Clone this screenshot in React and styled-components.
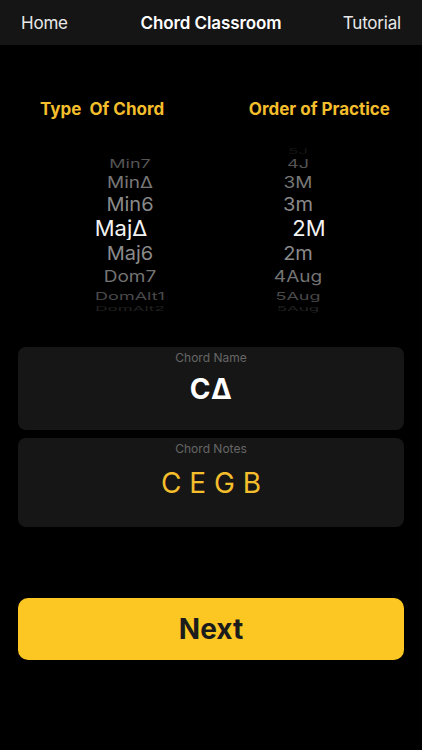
import React from 'react';
import styled, { createGlobalStyle } from 'styled-components';

const GlobalStyle = createGlobalStyle`
  html, body {
    margin: 0;
    padding: 0;
    background: #000;
  }
  body {
    font-family: Inter, "Noto Sans", "Liberation Sans", sans-serif;
    -webkit-font-smoothing: antialiased;
  }
`;

const Screen = styled.div`
  width: 422px;
  height: 750px;
  background: #000;
  display: flex;
  flex-direction: column;
  overflow: hidden;
`;

const NavBar = styled.div`
  height: 45px;
  background: #151515;
  display: grid;
  grid-template-columns: 1fr auto 1fr;
  align-items: center;
  padding: 0 21px;
  flex-shrink: 0;
`;

const NavLink = styled.span`
  font-size: 17px;
  color: #e8e8e8;
  letter-spacing: -0.2px;
  justify-self: ${(p) => (p.$right ? 'end' : 'start')};
`;

const NavTitle = styled.span`
  font-size: 17px;
  font-weight: 600;
  color: #fff;
  letter-spacing: -0.1px;
`;

const Headers = styled.div`
  margin-top: 54px;
  display: flex;
  justify-content: space-between;
  padding: 0 32px 0 40px;
`;

const Header = styled.span`
  font-size: 17px;
  font-weight: 700;
  line-height: 20px;
  color: #f4be2c;
  white-space: pre;
`;

const Wheels = styled.div`
  margin-top: 27px;
  display: flex;
  padding-left: 70px;
  gap: 48px;
`;

const Wheel = styled.div`
  width: 120px;
  display: flex;
  flex-direction: column;
`;

const Row = styled.div`
  height: ${(p) => p.$h}px;
  display: flex;
  align-items: center;
  justify-content: center;
  overflow: hidden;
`;

const RowText = styled.span`
  display: block;
  font-size: ${(p) => p.$size}px;
  line-height: 1;
  color: ${(p) => p.$color};
  transform: translateX(${(p) => p.$shift}px) scaleY(${(p) => p.$scale});
  white-space: nowrap;
`;

const Cards = styled.div`
  margin: 34px 18px 0;
  display: flex;
  flex-direction: column;
  gap: 8px;
`;

const Card = styled.div`
  height: ${(p) => p.$h}px;
  background: #161616;
  border-radius: 8px;
  display: flex;
  flex-direction: column;
  align-items: center;
  padding-top: 4px;
  box-sizing: border-box;
`;

const CardLabel = styled.span`
  font-size: 12px;
  line-height: 14px;
  color: #666;
`;

const ChordName = styled.span`
  margin-top: 8px;
  font-size: 28px;
  font-weight: 700;
  line-height: 32px;
  color: #fff;
  letter-spacing: 0.5px;
`;

const ChordNotes = styled.span`
  margin-top: 10px;
  font-size: 28px;
  line-height: 34px;
  color: #f4be2c;
  white-space: pre;
`;

const NextButton = styled.button`
  margin: 71px 18px 0;
  height: 62px;
  border: none;
  border-radius: 10px;
  background: #fdc723;
  color: #1c1c1c;
  font-family: inherit;
  font-size: 28px;
  font-weight: 700;
  cursor: pointer;
`;

// one entry per wheel row, top to bottom; index 4 is the selected row
const rowStyles = [
  { h: 10, scale: 0.45, color: '#141414', size: 17 },
  { h: 16, scale: 0.62, color: '#555', size: 18 },
  { h: 20, scale: 0.82, color: '#777', size: 19 },
  { h: 23, scale: 0.95, color: '#8a8a8a', size: 20 },
  { h: 25, scale: 1, color: '#f2f2f2', size: 22 },
  { h: 25, scale: 0.95, color: '#8a8a8a', size: 20 },
  { h: 22, scale: 0.85, color: '#747474', size: 19 },
  { h: 17, scale: 0.6, color: '#4a4a4a', size: 18 },
  { h: 9, scale: 0.4, color: '#222', size: 17 },
];

const chordTypes = ['', 'Min7', 'MinΔ', 'Min6', 'MajΔ', 'Maj6', 'Dom7', 'DomAlt1', 'DomAlt2'];
const intervals = ['5J', '4J', '3M', '3m', '2M', '2m', '4Aug', '5Aug', '5Aug'];

function PickerWheel({ items, shift }) {
  return (
    <Wheel>
      {items.map((label, i) => {
        const s = rowStyles[i];
        return (
          <Row key={i} $h={s.h}>
            <RowText $size={s.size} $color={s.color} $scale={s.scale} $shift={i === 4 ? shift : 0}>
              {label}
            </RowText>
          </Row>
        );
      })}
    </Wheel>
  );
}

export default function App() {
  return (
    <>
      <GlobalStyle />
      <Screen>
        <NavBar>
          <NavLink>Home</NavLink>
          <NavTitle>Chord Classroom</NavTitle>
          <NavLink $right>Tutorial</NavLink>
        </NavBar>

        <Headers>
          <Header>Type  Of Chord</Header>
          <Header>Order of Practice</Header>
        </Headers>

        <Wheels>
          <PickerWheel items={chordTypes} shift={-9} />
          <PickerWheel items={intervals} shift={11} />
        </Wheels>

        <Cards>
          <Card $h={83}>
            <CardLabel>Chord Name</CardLabel>
            <ChordName>CΔ</ChordName>
          </Card>
          <Card $h={89}>
            <CardLabel>Chord Notes</CardLabel>
            <ChordNotes>C E G B</ChordNotes>
          </Card>
        </Cards>

        <NextButton>Next</NextButton>
      </Screen>
    </>
  );
}
